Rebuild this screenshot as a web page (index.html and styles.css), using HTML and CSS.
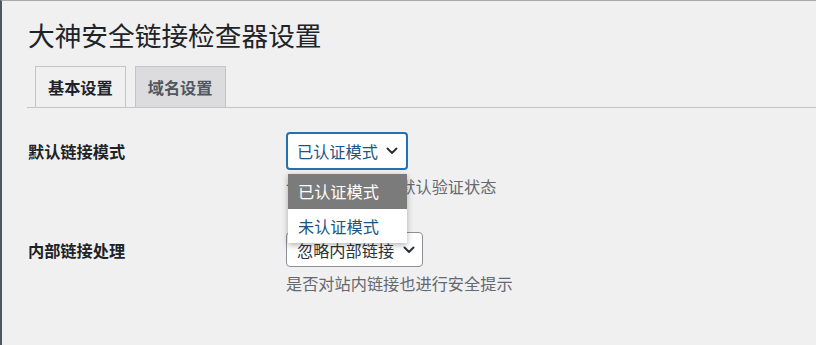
FILE: index.html
```html
<!DOCTYPE html>
<html lang="zh-CN">
<head>
<meta charset="utf-8">
<title>大神安全链接检查器设置</title>
<link rel="stylesheet" href="styles.css">
</head>
<body>
<div class="wrap">
  <h1 class="title">大神安全链接检查器设置</h1>
  <nav class="tabs">
    <a class="tab tab-active">基本设置</a>
    <a class="tab">域名设置</a>
  </nav>
  <div class="form">
    <div class="row">
      <div class="label">默认链接模式</div>
      <div class="field">
        <div class="select select-focus">
          <span>已认证模式</span>
          <svg class="chev" width="12" height="8" viewBox="0 0 12 8"><path d="M1.5 1.5 L6 6 L10.5 1.5" fill="none" stroke="#2c3338" stroke-width="2" stroke-linecap="round" stroke-linejoin="round"/></svg>
        </div>
        <div class="menu">
          <div class="opt opt-sel">已认证模式</div>
          <div class="opt">未认证模式</div>
        </div>
      </div>
      <div class="desc">设置外部链接的默认验证状态</div>
    </div>
    <div class="row row2">
      <div class="label">内部链接处理</div>
      <div class="field">
        <div class="select">
          <span>忽略内部链接</span>
          <svg class="chev" width="12" height="8" viewBox="0 0 12 8"><path d="M1.5 1.5 L6 6 L10.5 1.5" fill="none" stroke="#2c3338" stroke-width="2" stroke-linecap="round" stroke-linejoin="round"/></svg>
        </div>
      </div>
      <div class="desc">是否对站内链接也进行安全提示</div>
    </div>
  </div>
</div>
</body>
</html>
```

FILE: styles.css
```css
html, body {
  margin: 0;
  padding: 0;
  background: #f0f0f1;
}
body {
  font-family: "Noto Sans CJK SC", "Noto Sans", sans-serif;
  color: #1d2327;
}
.wrap {
  height: 344px;
  border-top: 1px solid #a7aaad;
  border-left: 2px solid #50575e;
  overflow: hidden;
}
.title {
  margin: 16px 0 0 26px;
  font-size: 26.7px;
  line-height: 36px;
  font-weight: 400;
  color: #1d2327;
}
.tabs {
  display: flex;
  gap: 9px;
  margin: 13px 0 0 25px;
  padding-left: 8px;
  border-bottom: 1px solid #c3c4c7;
}
.tab {
  display: block;
  box-sizing: border-box;
  height: 41px;
  padding: 0 12px;
  border: 1px solid #c3c4c7;
  border-bottom: none;
  background: #dcdcde;
  color: #50575e;
  font-size: 16.2px;
  font-weight: 700;
  line-height: 40px;
}
.tab-active {
  background: #f0f0f1;
  color: #1d2327;
}
.form {
  padding: 24px 0 0 26px;
}
.row {
  display: grid;
  grid-template-columns: 258px auto;
  row-gap: 5px;
}
.row2 {
  margin-top: 35px;
}
.label {
  align-self: center;
  font-size: 16.2px;
  font-weight: 700;
  line-height: 22px;
  color: #1d2327;
}
.field {
  position: relative;
  display: flex;
}
.select {
  box-sizing: border-box;
  display: flex;
  align-items: center;
  height: 35px;
  padding: 0 7px 0 10px;
  border: 1px solid #8c8f94;
  border-radius: 4px;
  background: #fff;
  color: #2c3338;
  font-size: 16.2px;
  line-height: 22px;
  white-space: nowrap;
}
.select-focus {
  width: 122px;
  height: 38px;
  padding: 0 8px 0 9px;
  border: 2px solid #2271b1;
  color: #1b5585;
}
.chev {
  margin-left: auto;
  padding-left: 9px;
  flex: none;
}
.select-focus .chev {
  padding-left: 6px;
}
.menu {
  position: absolute;
  left: 2px;
  top: 42px;
  width: 119px;
  background: #fff;
  box-shadow: 0 2px 6px rgba(0, 0, 0, 0.3);
  z-index: 2;
}
.opt {
  height: 34.5px;
  padding-left: 10px;
  font-size: 16.2px;
  line-height: 34.5px;
  color: #1b5585;
  white-space: nowrap;
}
.opt-sel {
  background: #7b7b7b;
  color: #fff;
}
.desc {
  grid-column: 2;
  font-size: 16.2px;
  line-height: 22px;
  color: #646970;
}
```
